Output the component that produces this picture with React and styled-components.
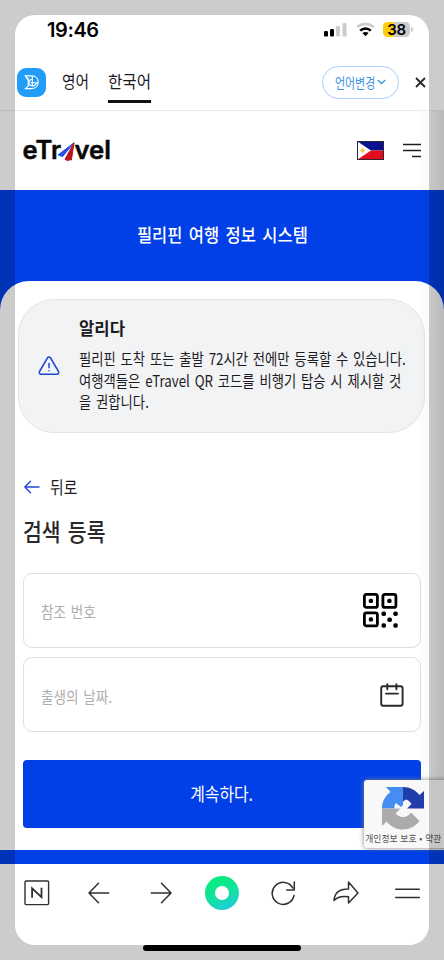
import styled, { createGlobalStyle } from 'styled-components'

const GlobalStyle = createGlobalStyle`
    * {
        box-sizing: border-box;
    }
    body {
        margin: 0;
        background: #ffffff;
        color: #1c1c1e;
        font-family: 'Noto Sans CJK KR', 'Noto Sans', sans-serif;
    }
    button {
        border: none;
        padding: 0;
        background: none;
        font-family: inherit;
        color: inherit;
    }
    svg {
        display: block;
        flex: none;
    }
`
const Screen = styled.div`
    position: relative;
    display: flex;
    flex-direction: column;
    width: 444px;
    height: 960px;
    overflow: hidden;
    background: #ffffff;
`
/* condensed Korean text */
const Text = styled.span`
    display: block;
    white-space: nowrap;
    font-size: ${(p) => p.$size}px;
    font-weight: ${(p) => p.$weight || 400};
    line-height: ${(p) => p.$line || p.$size * 1.4}px;
    color: ${(p) => p.$color || '#1c1c1e'};
    word-spacing: ${(p) => p.$gap || 0}px;
    transform: scaleX(${(p) => p.$scale || 0.85});
    transform-origin: ${(p) => p.$origin || 'left'} center;
`
const StatusBar = styled.header`
    display: flex;
    justify-content: space-between;
    height: 54px;
    padding: 18px 34px 0 47px;
`
const Clock = styled.time`
    font: 600 20px/24px Inter, sans-serif;
    letter-spacing: -0.4px;
    color: #000000;
`
const StatusIcons = styled.div`
    display: flex;
    gap: 8.5px;
    padding-top: 4px;
`
const Battery = styled.div`
    position: relative;
    width: 27px;
    height: 15px;
    border-radius: 4.5px;
    background: linear-gradient(90deg, #fccb0a 11px, #cbcbcd 11px);
    font: 600 15px/15px Inter, sans-serif;
    letter-spacing: -0.4px;
    text-align: center;
    color: #000000;

    &::after {
        content: '';
        position: absolute;
        right: -2.5px;
        top: 5px;
        width: 1.5px;
        height: 5px;
        border-radius: 0 2px 2px 0;
        background: #cbcbcd;
    }
`
const LanguageBar = styled.nav`
    display: flex;
    align-items: center;
    height: 57px;
    padding: 0 18px 0 17px;
    border-bottom: 1px solid #ececee;
`
const AppBadge = styled.div`
    display: flex;
    align-items: center;
    justify-content: center;
    width: 29px;
    height: 29px;
    margin-right: 16px;
    border-radius: 9px;
    background: #229df7;
`
const Tab = styled.button`
    width: ${(p) => p.$width}px;
    height: 41px;
    margin-right: 20px;
    padding-top: 1px;
    border-bottom: 3px solid ${(p) => (p.$active ? '#111111' : 'transparent')};
`
const ChangeButton = styled.button`
    display: flex;
    align-items: center;
    width: 77px;
    height: 33px;
    margin: 0 16px 0 auto;
    padding-left: 12px;
    border: 1px solid #a9cffa;
    border-radius: 17px;
`
const ChangeLabel = styled.div`
    width: 42px;
`
const SiteHeader = styled.header`
    display: flex;
    align-items: center;
    height: 79px;
    padding: 0 23px;
`
const HeaderActions = styled.div`
    display: flex;
    align-items: center;
    gap: 19px;
    margin-left: auto;
`
const Page = styled.main`
    display: flex;
    flex-direction: column;
    height: 674px;
    background: #0040e6;
`
const Hero = styled.div`
    display: flex;
    align-items: center;
    justify-content: center;
    height: 91px;
    padding-bottom: 1px;
`
const Panel = styled.section`
    height: 569px;
    padding: 18px 23px 0;
    border-radius: 29px 29px 0 0;
    background: #ffffff;
`
const Notice = styled.div`
    display: flex;
    align-items: center;
    height: 134px;
    margin: 0 -4px 0 -5px;
    padding-left: 19px;
    border: 1px solid #e3e4e7;
    border-radius: 36px;
    background: #f2f3f5;
`
const NoticeBody = styled.div`
    width: 328px;
    padding-left: 19px;
    margin-top: -3px;
`
const NoticeTitle = styled.div`
    margin-bottom: 8px;
`
const BackLink = styled.button`
    display: flex;
    align-items: center;
    gap: 10px;
    height: 24px;
    margin-top: 42px;
`
const Heading = styled.div`
    height: 34px;
    margin: 15px 0 25px;
`
const Field = styled.div`
    display: flex;
    align-items: center;
    justify-content: space-between;
    height: 75px;
    margin-bottom: 9px;
    padding: 0 ${(p) => p.$right}px 0 17px;
    border: 1px solid #dfdfe1;
    border-radius: 9px;
`
const DateLabel = styled.div`
    padding-top: 4px;
`
const SubmitButton = styled.button`
    display: flex;
    align-items: center;
    justify-content: center;
    width: 398px;
    height: 68px;
    margin-top: 28px;
    border-radius: 4px;
    background: #0040e6;
`
const Recaptcha = styled.aside`
    position: absolute;
    left: 364px;
    top: 780px;
    display: flex;
    flex-direction: column;
    align-items: center;
    width: 90px;
    height: 68px;
    padding: 7px 11px 0 0;
    border-radius: 3px;
    background: #f8f8f9;
    box-shadow: 0 0 5px #808080;
`
const Toolbar = styled.nav`
    display: grid;
    grid-template-columns: repeat(7, 1fr);
    height: 96px;
    padding: 11px 5px 0 6px;
`
const Tool = styled.button`
    display: flex;
    align-items: center;
    justify-content: center;
    height: 35px;
`
const HomeBall = styled.span`
    width: 34px;
    height: 34px;
    border: 10.5px solid transparent;
    border-radius: 50%;
    background: linear-gradient(#ffffff, #ffffff) padding-box,
        linear-gradient(155deg, #06ef70, #12e39b 50%, #25c5ee) border-box;
`
const EdgeShade = styled.div`
    position: absolute;
    top: 111px;
    right: 0;
    width: 29px;
    height: 738px;
    background: linear-gradient(90deg, transparent, rgba(0, 0, 0, 0.02) 50%, rgba(0, 0, 0, 0.09));
    pointer-events: none;
`
const FrameShade = styled.div`
    position: absolute;
    inset: 15px;
    border-radius: 20px;
    box-shadow: 0 0 0 40px rgba(0, 0, 0, 0.2);
    pointer-events: none;
`
const HomeIndicator = styled.div`
    position: absolute;
    left: 143px;
    top: 945px;
    width: 158px;
    height: 6px;
    border-radius: 3px;
    background: #000000;
`

const noticeLines = [
    '필리핀 도착 또는 출발 72시간 전에만 등록할 수 있습니다.',
    '여행객들은 eTravel QR 코드를 비행기 탑승 시 제시할 것',
    '을 권합니다.',
]

function Signal() {
    return (
        <svg width="23" height="15" viewBox="0 0 23 15">
            <rect x="0" y="9" width="4" height="5.5" rx="1.2" fill="#000" />
            <rect x="6" y="7" width="4" height="7.5" rx="1.2" fill="#000" />
            <rect x="12" y="4" width="4" height="10.5" rx="1.2" fill="#ccc" />
            <rect x="18.5" y="1" width="4" height="13.5" rx="1.2" fill="#ccc" />
        </svg>
    )
}

function Wifi() {
    return (
        <svg width="19" height="15" viewBox="0 0 19 15" fill="none" strokeWidth="2.6">
            <path d="M1.2 5.1C5.8.9 13.2.9 17.8 5.1" stroke="#ccc" />
            <path d="M4.2 8.6c3-2.9 7.6-2.9 10.6 0" stroke="#000" />
            <path d="M6.4 11.1c1.8-1.6 4.4-1.6 6.2 0L9.5 14.3z" fill="#000" />
        </svg>
    )
}

function PapagoMark() {
    return (
        <svg width="17" height="17" viewBox="0 0 17 17" fill="none" stroke="#fff" strokeWidth="1.15">
            <path d="M2.3 1.8h6.4c4 .2 6.5 2.8 6.5 6.2 0 4.2-3.2 6.6-7.2 6.6H2.5l2.7-2.7V5z" />
            <path d="M9.3 2v6.7h5.8M9 5.3C6.8 5.5 6 7 6 8.7c0 2.2 1.8 3.2 3.5 3.2 1.8 0 3.3-1.2 3.6-2.8M9 8.7H7.7M9.3 8.7v3M2.4 2l2.8 4.2" />
        </svg>
    )
}

function Logo() {
    return (
        <svg width="90" height="34" viewBox="0 0 90 34" fontFamily="Inter, sans-serif" fontSize="25" fontWeight="600" stroke="#080808" strokeWidth=".5" strokeLinejoin="round" fill="#080808">
            <text x="-.6" y="25" textLength="38.6" lengthAdjust="spacingAndGlyphs">eTr</text>
            <text x="51.5" y="25" textLength="36.5" lengthAdjust="spacingAndGlyphs">vel</text>
            <path d="M35 21 51 8.8 39.4 22.8l-1.3-1-1.1.1-.3-1z" fill="#204fe0" stroke="#204fe0" strokeWidth="1" />
            <path d="M51 8.800 42 25.400l1.500.600 1.200 1 1.200-1.200 2.500.200z" fill="#b9141d" stroke="#b9141d" strokeWidth="1" />
        </svg>
    )
}

function Flag() {
    return (
        <svg width="27" height="19" viewBox="0 0 27 19">
            <path d="M.5.5h26v9H.5z" fill="#0b108f" />
            <path d="M.5 9.5h26v9H.5z" fill="#e10d1d" />
            <path d="M.5.5 14 9.5l-13.5 9z" fill="#fff" />
            <circle cx="5.5" cy="9.5" r="2" fill="#f7bd46" />
            <path d="M5.5 6.3v6.4M2.3 9.5h6.4" stroke="#f9cd77" />
            <rect x=".5" y=".5" width="26" height="18" fill="none" stroke="#312733" />
        </svg>
    )
}

function QrIcon() {
    return (
        <svg width="35" height="35" viewBox="0 0 35 35" fill="none">
            {[[0, 0], [18.5, 0], [0, 18.5]].map(([x, y]) => (
                <g key={`${x}-${y}`}>
                    <rect x={x + 1.4} y={y + 1.4} width="13" height="13" rx="2" stroke="#000" strokeWidth="2.8" />
                    <rect x={x + 5.8} y={y + 5.8} width="4.2" height="4.2" rx="1.5" fill="#000" />
                </g>
            ))}
            {[[18.5, 18.5], [30.3, 18.5], [24.4, 24.4], [18.5, 30.3], [30.3, 30.3]].map(([x, y]) => (
                <rect key={`${x}-${y}`} x={x} y={y} width="4.5" height="4.5" rx="1.7" fill="#000" />
            ))}
        </svg>
    )
}

function CalendarIcon() {
    return (
        <svg width="24" height="24" viewBox="0 0 24 24" fill="none" stroke="#29292b" strokeWidth="1.9" strokeLinecap="round">
            <rect x="1.2" y="3.2" width="21.4" height="19.6" rx="2" />
            <path d="M7.3 1.3v5M16.4 1.3v5M6 10.6h12" />
        </svg>
    )
}

function RecaptchaMark() {
    return (
        <svg width="43" height="43" viewBox="0 0 43 43">
            <path d="M21 0c7 0 12.500 3 16.500 8L42 4v17.500H25l4.500-4.500c-1.500-2.600-3.500-4-5.500-4.500l-3 2z" fill="#203daa" />
            <path d="M21 0H4l4.500 5C3 9 0 14.500 0 21.500h12.500c-.5-2.500.2-4 1.500-5.500l5 4 2-2z" fill="#458df1" />
            <path d="M0 21.500V39l4.700-4.500C9 40 14.500 42.500 21 42.500c6.500 0 12.500-3.200 16.500-8.500l-8.500-8.500c-2 2.800-4.500 4.500-8 4.500-3.200 0-5.500-1.300-7.300-3.500l4.800-5z" fill="#ababad" />
        </svg>
    )
}

function ToolIcon({ d, width = 26 }) {
    return (
        <svg width={width} height="26" viewBox="0 0 26 26" fill="none" stroke="#303034" strokeWidth="1.5" strokeLinecap="round" strokeLinejoin="round">
            <path d={d} />
        </svg>
    )
}

function App() {
    return (
        <Screen>
            <GlobalStyle />
            <StatusBar>
                <Clock>19:46</Clock>
                <StatusIcons>
                    <Signal />
                    <Wifi />
                    <Battery>38</Battery>
                </StatusIcons>
            </StatusBar>
            <LanguageBar>
                <AppBadge><PapagoMark /></AppBadge>
                <Tab $width={26}><Text $size={17.5} $line={24} $scale={0.84}>영어</Text></Tab>
                <Tab $width={43} $active><Text $size={17.5} $line={24} $scale={0.89}>한국어</Text></Tab>
                <ChangeButton>
                    <ChangeLabel><Text $size={13.5} $scale={0.81} $color="#3c94e5">언어변경</Text></ChangeLabel>
                    <svg width="9" height="6" viewBox="0 0 9 6" fill="none" stroke="#3c94e5" strokeWidth="1.4">
                        <path d="m.8 1 3.7 3.5L8.2 1" />
                    </svg>
                </ChangeButton>
                <svg width="11" height="11" viewBox="0 0 11 11" stroke="#29292b" strokeWidth="1.8">
                    <path d="m1 1 9 9M10 1l-9 9" />
                </svg>
            </LanguageBar>
            <SiteHeader>
                <Logo />
                <HeaderActions>
                    <Flag />
                    <svg width="18" height="15" viewBox="0 0 18 15" stroke="#202022" strokeWidth="1.7">
                        <path d="M0 1.5h18M0 7.5h18M9 13.5h9" />
                    </svg>
                </HeaderActions>
            </SiteHeader>
            <Page>
                <Hero>
                    <Text $size={18} $weight={500} $gap={3} $scale={0.915} $color="#ffffff" $origin="center">필리핀 여행 정보 시스템</Text>
                </Hero>
                <Panel>
                    <Notice>
                        <svg width="22" height="20" viewBox="0 0 22 20" fill="none" stroke="#2148d5" strokeWidth="1.5" strokeLinecap="round" strokeLinejoin="round">
                            <path d="M9.4 2 1.5 15.5c-.7 1.5 0 2.8 1.6 2.8h15.8c1.6 0 2.3-1.3 1.6-2.8L12.6 2c-.8-1.3-2.4-1.3-3.2 0z" />
                            <path d="M11 7.5v4.300M11 14.700v.1" />
                        </svg>
                        <NoticeBody>
                            <NoticeTitle><Text $size={17} $weight={700} $scale={0.98}>알리다</Text></NoticeTitle>
                            {noticeLines.map((line) => (
                                <Text key={line} $size={16} $line={21.7} $gap={2.2} $scale={0.833}>{line}</Text>
                            ))}
                        </NoticeBody>
                    </Notice>
                    <BackLink>
                        <svg width="17" height="14" viewBox="0 0 17 14" fill="none" stroke="#2148d5" strokeWidth="1.4" strokeLinecap="round" strokeLinejoin="round">
                            <path d="M16 7H2M7.5 1.3 1.8 7l5.7 5.7" />
                        </svg>
                        <Text $size={17.5} $line={26}>뒤로</Text>
                    </BackLink>
                    <Heading><Text $size={23.5} $weight={500} $gap={3} $scale={0.87} $line={34} $color="#29292b">검색 등록</Text></Heading>
                    <Field $right={22}>
                        <Text $size={16} $line={24} $gap={2} $color="#adadaf">참조 번호</Text>
                        <QrIcon />
                    </Field>
                    <Field $right={16}>
                        <DateLabel><Text $size={16} $gap={2} $color="#adadaf">출생의 날짜.</Text></DateLabel>
                        <CalendarIcon />
                    </Field>
                    <SubmitButton><Text $size={18} $scale={0.88} $color="#ffffff" $origin="center">계속하다.</Text></SubmitButton>
                </Panel>
            </Page>
            <Toolbar>
                <Tool>
                    <svg width="26" height="26" viewBox="0 0 26 26" fill="none" stroke="#303034">
                        <rect x="1" y="1" width="23.6" height="23.6" rx="1" strokeWidth="1.4" />
                        <path d="M8.1 17.800V8.300l9.400 8.800V7.800" strokeWidth="1.8" />
                    </svg>
                </Tool>
                <Tool><ToolIcon d="M22.8 13H3M12.5 3.3 3 13l9.5 9.7" /></Tool>
                <Tool><ToolIcon d="M3.2 13H23M13.5 3.3 23 13l-9.5 9.7" /></Tool>
                <Tool><HomeBall /></Tool>
                <Tool><ToolIcon d="M23 15.500A11 11 0 1 1 21.800 8M23.300 2v8h-7.500" /></Tool>
                <Tool><ToolIcon d="M15.500 2 25 13l-9.500 10v-6.300C9 15.800 4 17 1 20.500 1.600 12.800 6.500 8.800 15.500 9z" /></Tool>
                <Tool><ToolIcon d="M.700 9.200h23.600M.700 17.400h23.600" /></Tool>
            </Toolbar>
            <EdgeShade />
            <Recaptcha>
                <RecaptchaMark />
                <Text $size={9.5} $line={17} $color="#555558" $gap={1} $scale={0.92} $origin="center">개인정보 보호 • 약관</Text>
            </Recaptcha>
            <FrameShade />
            <HomeIndicator />
        </Screen>
    )
}

export default App
